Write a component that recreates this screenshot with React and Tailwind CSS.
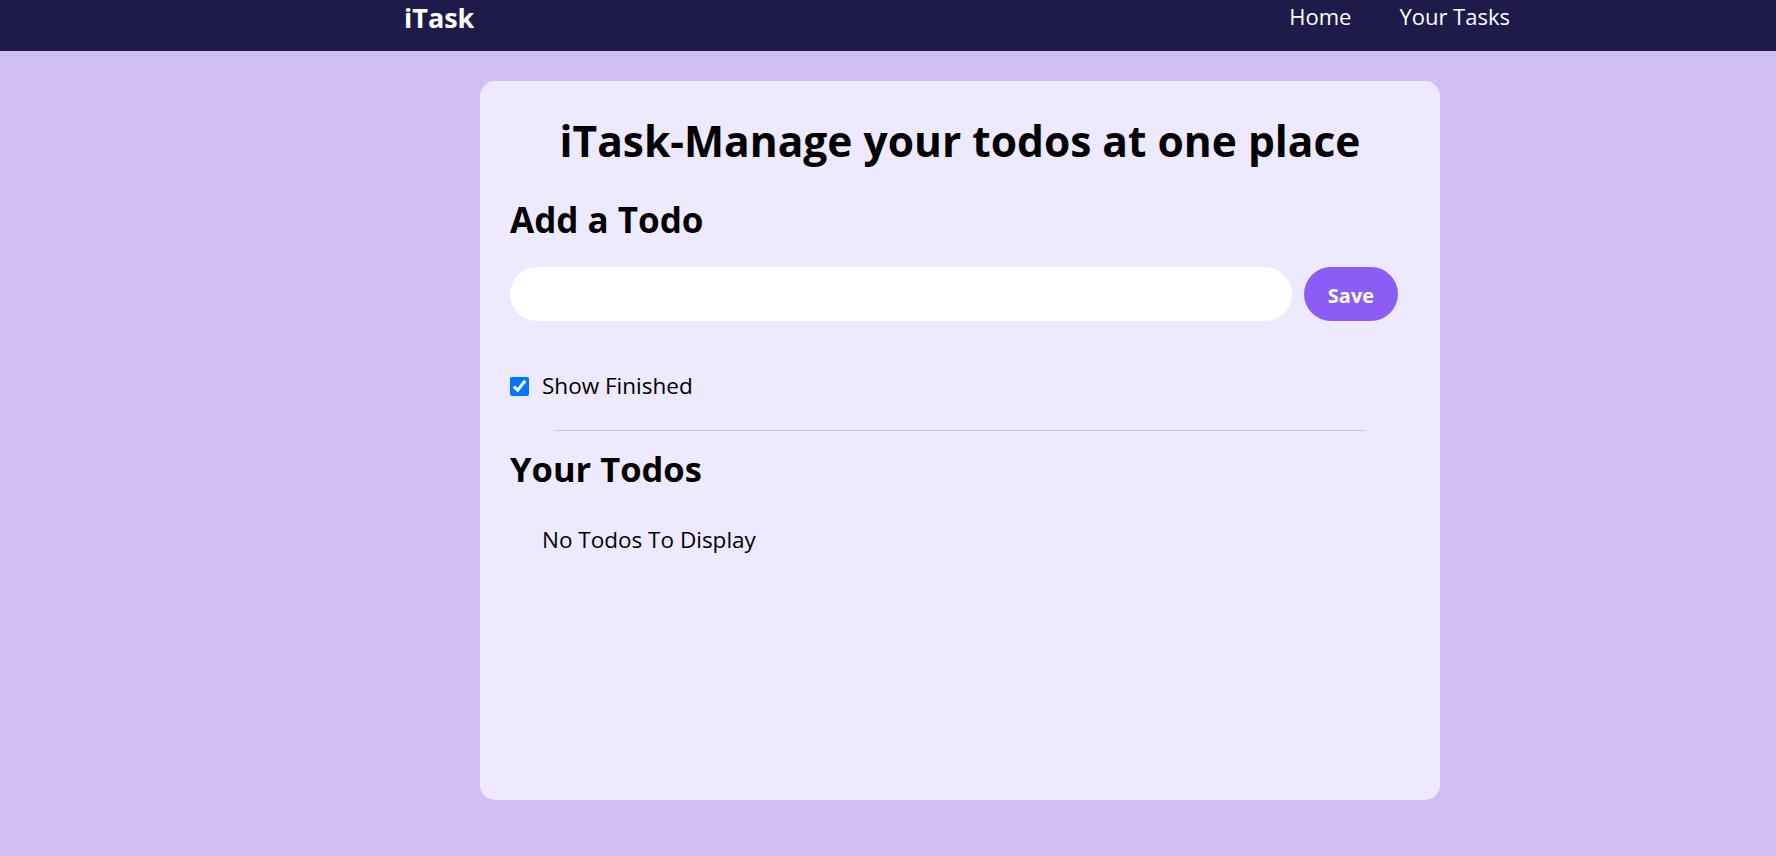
export default function App() {
  return (
    <div className="min-h-screen bg-[#d0bff1] font-['Open_Sans',sans-serif] text-black">
      {/* Navbar */}
      <nav className="h-[51px] bg-[#1e1b4b] pl-[144px] text-white">
        <div className="mx-auto flex w-[1104px] items-start justify-between">
          <span className="-ml-[4px] text-[27px] font-bold leading-[36px]">iTask</span>
          <ul className="flex gap-[48px] pr-[2px] text-[22px] leading-[32px]">
            <li className="cursor-pointer">Home</li>
            <li className="cursor-pointer">Your Tasks</li>
          </ul>
        </div>
      </nav>

      <main className="pl-[144px]">
        <div className="mx-auto mt-[30px] h-[719px] w-[960px] rounded-[15px] bg-[#ede9fe] px-[30px] pt-[35px]">
          <h1 className="text-center text-[42.5px] font-bold leading-[50px]">
            iTask-Manage your todos at one place
          </h1>

          {/* Add todo */}
          <div className="mt-[32px]">
            <h2 className="text-[35px] font-bold leading-[44px]">Add a Todo</h2>
            <div className="mt-[25px] flex gap-[12px] pr-[12px]">
              <input
                type="text"
                className="h-[54px] flex-1 rounded-full bg-white px-5 text-lg outline-none"
              />
              <button className="h-[54px] w-[94px] rounded-full bg-[#8b5cf6] pt-[3px] text-[20px] font-bold text-white">
                Save
              </button>
            </div>
          </div>

          <label className="mt-[50px] flex items-center gap-[13px] text-[22.5px] leading-[30px]">
            <input type="checkbox" defaultChecked className="h-[19px] w-[19px]" />
            Show Finished
          </label>

          <div className="mx-auto mt-[29px] h-px w-[810px] bg-[#c9c1de]" />

          <h2 className="mt-[16px] text-[34.5px] font-bold leading-[44px]">Your Todos</h2>
          <div className="ml-[32px] mt-[34px] text-[22.5px] leading-[30px]">No Todos To Display</div>
        </div>
      </main>
    </div>
  )
}
